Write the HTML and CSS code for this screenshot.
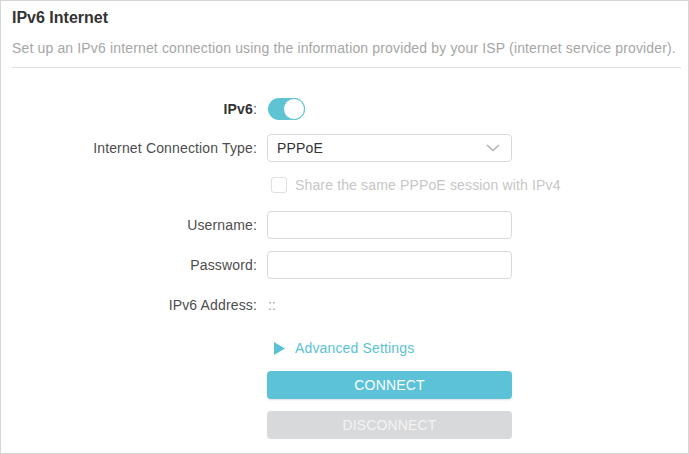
FILE: index.html
```html
<!DOCTYPE html>
<html>
<head>
<meta charset="utf-8">
<link rel="stylesheet" href="styles.css">
</head>
<body>
<div class="frame">
  <div class="panel">
    <div class="head">
      <h1 class="title">IPv6 Internet</h1>
      <p class="desc">Set up an IPv6 internet connection using the information provided by your ISP (internet service provider).</p>
    </div>
    <div class="form">
      <div class="row row-toggle">
        <div class="label"><b>IPv6</b>:</div>
        <div class="field">
          <span class="toggle"><span class="knob"></span></span>
        </div>
      </div>
      <div class="row row-select">
        <div class="label">Internet Connection Type:</div>
        <div class="field">
          <div class="select">
            <span>PPPoE</span>
            <svg class="chev" width="14" height="8" viewBox="0 0 14 8"><path d="M1 1 L7 6.5 L13 1" fill="none" stroke="#b3b3b3" stroke-width="1.6"/></svg>
          </div>
        </div>
      </div>
      <div class="row row-check">
        <div class="label"></div>
        <div class="field">
          <span class="checkbox"></span>
          <span class="check-text">Share the same PPPoE session with IPv4</span>
        </div>
      </div>
      <div class="row row-user">
        <div class="label">Username:</div>
        <div class="field"><div class="input"></div></div>
      </div>
      <div class="row row-pass">
        <div class="label">Password:</div>
        <div class="field"><div class="input"></div></div>
      </div>
      <div class="row row-addr">
        <div class="label">IPv6 Address:</div>
        <div class="field"><span class="value">::</span></div>
      </div>
      <div class="row row-adv">
        <div class="label"></div>
        <div class="field">
          <svg class="tri" width="11" height="13" viewBox="0 0 11 13"><path d="M0 0 L11 6.5 L0 13 Z" fill="#5bc2d6"/></svg>
          <span class="adv-text">Advanced Settings</span>
        </div>
      </div>
      <div class="row row-connect">
        <div class="label"></div>
        <div class="field"><div class="btn btn-connect">CONNECT</div></div>
      </div>
      <div class="row row-disconnect">
        <div class="label"></div>
        <div class="field"><div class="btn btn-disconnect">DISCONNECT</div></div>
      </div>
    </div>
  </div>
</div>
</body>
</html>
```
FILE: styles.css
```css
* { box-sizing: border-box; }
html, body { margin: 0; padding: 0; }
body {
  font-family: "Liberation Sans", Arial, sans-serif;
  font-size: 14px;
  letter-spacing: 0.15px;
  color: #4d4d4d;
  background: #fff;
}
.frame {
  width: 689px;
  height: 454px;
  border: 1px solid #d6d6d6;
  overflow: hidden;
}
.panel {
  padding: 7px 7px 0 11px;
}
.head {
  border-bottom: 1px solid #dedede;
  padding-bottom: 9px;
}
.title {
  margin: 0;
  font-size: 16px;
  line-height: 20px;
  font-weight: bold;
  letter-spacing: 0;
  color: #333;
}
.desc {
  margin: 10px 0 0 0;
  font-size: 14px;
  line-height: 20px;
  color: #a6a6a6;
  white-space: nowrap;
}
.form {
  display: flex;
  flex-direction: column;
  padding-top: 30px;
}
.row {
  display: flex;
  align-items: center;
}
.label {
  width: 245px;
  text-align: right;
  color: #4d4d4d;
  line-height: 20px;
  flex: none;
  white-space: nowrap;
}
.label b { color: #333; }
.field {
  margin-left: 10px;
  width: 245px;
  display: flex;
  align-items: center;
  white-space: nowrap;
}
.row-toggle { height: 22px; }
.row-select { height: 28px; margin-top: 14px; }
.row-check { height: 20px; margin-top: 13px; }
.row-user { height: 28px; margin-top: 16px; }
.row-pass { height: 28px; margin-top: 12px; }
.row-addr { height: 20px; margin-top: 16px; }
.row-adv { height: 20px; margin-top: 23px; }
.row-connect { height: 28px; margin-top: 13px; }
.row-disconnect { height: 28px; margin-top: 12px; }

.toggle {
  position: relative;
  display: block;
  width: 37px;
  height: 22px;
  margin-left: 1px;
  border-radius: 11px;
  background: #5ec4d4;
}
.knob {
  position: absolute;
  right: 0;
  top: 0;
  width: 22px;
  height: 22px;
  border-radius: 50%;
  background: #fff;
  border: 1px solid #5ec4d4;
}
.select, .input {
  width: 245px;
  height: 28px;
  border: 1px solid #d9d9d9;
  border-radius: 4px;
  background: #fff;
  flex: none;
}
.select {
  display: flex;
  align-items: center;
  justify-content: space-between;
  padding: 0 11px 0 9px;
  color: #333;
}
.chev { display: block; }
.checkbox {
  width: 16px;
  height: 16px;
  border: 1px solid #e0e0e0;
  border-radius: 3px;
  margin-left: 4px;
  flex: none;
}
.check-text {
  margin-left: 8px;
  color: #c6c6c6;
}
.value {
  margin-left: 1px;
  color: #999;
}
.tri {
  display: block;
  margin-left: 7px;
  flex: none;
}
.adv-text {
  margin-left: 10px;
  color: #5bc2d6;
}
.btn {
  width: 245px;
  height: 28px;
  border-radius: 4px;
  display: flex;
  align-items: center;
  justify-content: center;
  font-size: 14px;
  flex: none;
}
.btn-connect {
  background: #5cc2d7;
  color: #fff;
  box-shadow: 0 1px 2px rgba(0,0,0,0.12);
}
.btn-disconnect {
  background: #d8d9da;
  color: #f4f4f4;
}
```
